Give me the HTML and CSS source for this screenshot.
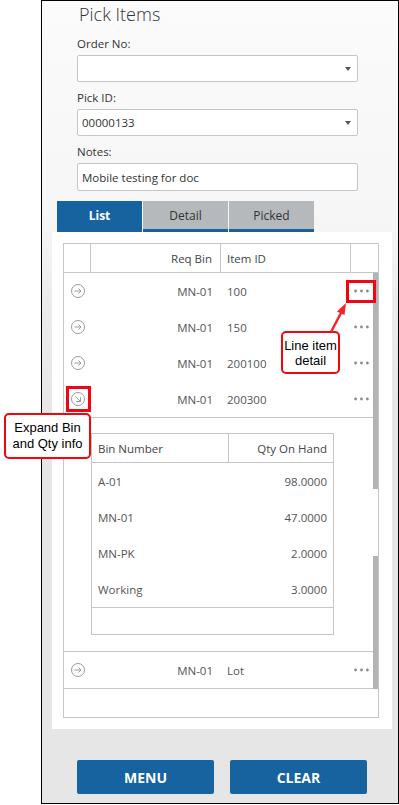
FILE: index.html
```html
<!DOCTYPE html>
<html>
<head>
<meta charset="utf-8">
<link rel="stylesheet" href="styles.css">
</head>
<body>
<div class="frame">
  <div class="title">Pick Items</div>
  <div class="form">
    <div class="label first">Order No:</div>
    <div class="field select"><span class="val"></span><span class="caret"></span></div>
    <div class="label">Pick ID:</div>
    <div class="field select"><span class="val">00000133</span><span class="caret"></span></div>
    <div class="label">Notes:</div>
    <div class="field notes"><span class="val">Mobile testing for doc</span></div>
  </div>
  <div class="tabs">
    <div class="tab active">List</div>
    <div class="tab">Detail</div>
    <div class="tab">Picked</div>
  </div>
  <div class="panel">
    <div class="grid">
      <div class="ghead">
        <div class="hc c1"></div>
        <div class="hc c2">Req Bin</div>
        <div class="hc c3">Item ID</div>
        <div class="hc c4"></div>
      </div>
      <div class="row">
        <div class="c1"><svg class="ic" width="16" height="16" viewBox="0 0 16 16"><circle cx="8" cy="8" r="6.5" fill="none" stroke="#9c9c9c" stroke-width="1"/><path d="M4.5 8H11M8.5 5.5L11 8L8.5 10.5" fill="none" stroke="#9c9c9c" stroke-width="1"/></svg></div>
        <div class="c2">MN-01</div><div class="c3">100</div>
        <div class="c4"><svg width="15" height="4" viewBox="0 0 15 4"><circle cx="1.6" cy="2" r="1.4" fill="#8a8a8a"/><circle cx="7.5" cy="2" r="1.4" fill="#8a8a8a"/><circle cx="13.4" cy="2" r="1.4" fill="#8a8a8a"/></svg></div>
      </div>
      <div class="row">
        <div class="c1"><svg class="ic" width="16" height="16" viewBox="0 0 16 16"><circle cx="8" cy="8" r="6.5" fill="none" stroke="#9c9c9c" stroke-width="1"/><path d="M4.5 8H11M8.5 5.5L11 8L8.5 10.5" fill="none" stroke="#9c9c9c" stroke-width="1"/></svg></div>
        <div class="c2">MN-01</div><div class="c3">150</div>
        <div class="c4"><svg width="15" height="4" viewBox="0 0 15 4"><circle cx="1.6" cy="2" r="1.4" fill="#8a8a8a"/><circle cx="7.5" cy="2" r="1.4" fill="#8a8a8a"/><circle cx="13.4" cy="2" r="1.4" fill="#8a8a8a"/></svg></div>
      </div>
      <div class="row">
        <div class="c1"><svg class="ic" width="16" height="16" viewBox="0 0 16 16"><circle cx="8" cy="8" r="6.5" fill="none" stroke="#9c9c9c" stroke-width="1"/><path d="M4.5 8H11M8.5 5.5L11 8L8.5 10.5" fill="none" stroke="#9c9c9c" stroke-width="1"/></svg></div>
        <div class="c2">MN-01</div><div class="c3">200100</div>
        <div class="c4"><svg width="15" height="4" viewBox="0 0 15 4"><circle cx="1.6" cy="2" r="1.4" fill="#8a8a8a"/><circle cx="7.5" cy="2" r="1.4" fill="#8a8a8a"/><circle cx="13.4" cy="2" r="1.4" fill="#8a8a8a"/></svg></div>
      </div>
      <div class="row last">
        <div class="c1"><svg class="ic" width="16" height="16" viewBox="0 0 16 16"><circle cx="8" cy="8" r="6.5" fill="none" stroke="#9c9c9c" stroke-width="1"/><path d="M5.3 5.3L10.5 10.5M10.5 6.3V10.5H6.3" fill="none" stroke="#9c9c9c" stroke-width="1"/></svg></div>
        <div class="c2">MN-01</div><div class="c3">200300</div>
        <div class="c4"><svg width="15" height="4" viewBox="0 0 15 4"><circle cx="1.6" cy="2" r="1.4" fill="#8a8a8a"/><circle cx="7.5" cy="2" r="1.4" fill="#8a8a8a"/><circle cx="13.4" cy="2" r="1.4" fill="#8a8a8a"/></svg></div>
      </div>
      <div class="expand">
        <div class="sub">
          <div class="shead">
            <div class="sc1">Bin Number</div>
            <div class="sc2">Qty On Hand</div>
          </div>
          <div class="srow"><div class="sc1">A-01</div><div class="sc2">98.0000</div></div>
          <div class="srow"><div class="sc1">MN-01</div><div class="sc2">47.0000</div></div>
          <div class="srow"><div class="sc1">MN-PK</div><div class="sc2">2.0000</div></div>
          <div class="srow"><div class="sc1">Working</div><div class="sc2">3.0000</div></div>
          <div class="sfill"></div>
        </div>
      </div>
      <div class="row last">
        <div class="c1"><svg class="ic" width="16" height="16" viewBox="0 0 16 16"><circle cx="8" cy="8" r="6.5" fill="none" stroke="#9c9c9c" stroke-width="1"/><path d="M4.5 8H11M8.5 5.5L11 8L8.5 10.5" fill="none" stroke="#9c9c9c" stroke-width="1"/></svg></div>
        <div class="c2">MN-01</div><div class="c3">Lot</div>
        <div class="c4"><svg width="15" height="4" viewBox="0 0 15 4"><circle cx="1.6" cy="2" r="1.4" fill="#8a8a8a"/><circle cx="7.5" cy="2" r="1.4" fill="#8a8a8a"/><circle cx="13.4" cy="2" r="1.4" fill="#8a8a8a"/></svg></div>
      </div>
      <div class="gfill"></div>
      <div class="scroll s1"></div>
      <div class="scroll s2"></div>
    </div>
  </div>
  <div class="buttons">
    <div class="btn">MENU</div>
    <div class="btn">CLEAR</div>
  </div>
</div>

<div class="mark m1"></div>
<div class="mark m2"></div>
<div class="callout co1">Line item<br>detail</div>
<div class="callout co2">Expand Bin<br>and Qty info</div>
<svg class="arrow" width="30" height="34" viewBox="0 0 30 34">
  <path d="M9 32L19.5 12" stroke="#f0262a" stroke-width="2.5" fill="none"/>
  <path d="M24 3L15 11.5L22.5 15Z" fill="#f0262a"/>
</svg>
</body>
</html>
```

FILE: styles.css
```css
* { box-sizing: border-box; }
html, body { margin: 0; padding: 0; background: #fff; }
body {
  font-family: "Open Sans", "Noto Sans", sans-serif;
  font-size: 12px;
  color: #333;
  position: relative;
  width: 399px;
  height: 805px;
  overflow: hidden;
}
.frame {
  margin-left: 41px;
  width: 358px;
  height: 804px;
  border: 1px solid #000;
  background: linear-gradient(#fbfbfb 0px, #f6f6f6 220px, #ececec 300px, #e6e6e6 420px, #e6e6e6 100%);
  display: flex;
  flex-direction: column;
}
.title {
  height: 35px;
  padding: 1px 0 0 37px;
  font-size: 18px;
  font-weight: 300;
  line-height: 24px;
  color: #333;
}
.form {
  padding-left: 35px;
  width: 316px;
}
.label {
  height: 16px;
  line-height: 16px;
  margin-top: 8px;
  margin-bottom: 3px;
  font-size: 11.5px;
  color: #333;
}
.label.first { margin-top: 0; }
.field {
  height: 27px;
  background: #fff;
  border: 1px solid #c6c6c6;
  border-radius: 2px;
  display: flex;
  align-items: center;
  justify-content: space-between;
  padding: 0 6px 0 4px;
}
.field.notes { height: 28px; }
.val { font-size: 11.5px; color: #333; }
.caret {
  width: 0; height: 0;
  border-left: 3.5px solid transparent;
  border-right: 3.5px solid transparent;
  border-top: 4px solid #555;
}
.tabs {
  margin-top: 10px;
  padding-left: 15px;
  display: flex;
  gap: 1px;
  height: 31px;
}
.tab {
  width: 85px;
  height: 31px;
  background: #b5b9bc;
  border-bottom: 3px solid #16619e;
  display: flex;
  align-items: center;
  justify-content: center;
  padding-top: 0;
  font-size: 12px;
  color: #333;
}
.tab.active {
  background: #16639f;
  color: #fff;
  font-weight: 700;
  border-bottom-color: #16639f;
}
.panel {
  margin-left: 10px;
  width: 340px;
  background: #fff;
  padding: 11px 13px 11px 11px;
}
.grid {
  position: relative;
  border: 1px solid #c6c6c6;
  height: 475px;
  display: flex;
  flex-direction: column;
}
.ghead {
  display: flex;
  height: 29px;
  border-bottom: 1px solid #c6c6c6;
  flex: none;
}
.hc {
  border-right: 1px solid #c6c6c6;
  display: flex;
  align-items: center;
  font-size: 11.5px;
  color: #444;
}
.hc.c4 { border-right: none; }
.c1 { width: 27px; flex: none; }
.c2 { width: 130px; flex: none; justify-content: flex-end; padding-right: 8px; text-align: right; }
.c3 { width: 130px; flex: none; padding-left: 6px; }
.c4 { flex: 1; }
.row {
  display: flex;
  height: 36px;
  align-items: center;
  flex: none;
  font-size: 11.5px;
  color: #555;
}
.row .c1 { display: flex; justify-content: center; align-items: center; }
.row .c4 { display: flex; align-items: center; padding-left: 3px; }
.row.last { border-bottom: 1px solid #c6c6c6; height: 37px; }
.expand {
  padding: 15px 0 16px 27px;
  border-bottom: 1px solid #c6c6c6;
  flex: none;
}
.sub {
  width: 243px;
  border: 1px solid #c6c6c6;
}
.shead {
  display: flex;
  height: 29px;
  border-bottom: 1px solid #c6c6c6;
  align-items: stretch;
  font-size: 11.5px;
  color: #444;
}
.shead .sc1 { border-right: 1px solid #c6c6c6; }
.sc1 { width: 137px; padding-left: 6px; display: flex; align-items: center; }
.sc2 { flex: 1; padding-right: 6px; display: flex; align-items: center; justify-content: flex-end; }
.srow {
  display: flex;
  height: 36px;
  font-size: 11.5px;
  color: #555;
}
.srow:nth-child(5) { border-bottom: 1px solid #c6c6c6; height: 37px; }
.sfill { height: 26px; }
.gfill { flex: 1; }
.scroll {
  position: absolute;
  right: 0;
  width: 5px;
  background: #b3b3b3;
}
.s1 { top: 29px; height: 216px; }
.s2 { top: 312px; height: 133px; }
.buttons {
  margin-top: 31px;
  padding-left: 35px;
  display: flex;
  gap: 16px;
}
.btn {
  width: 137px;
  height: 34px;
  background: #16639f;
  border-radius: 2px;
  color: #fff;
  font-weight: 700;
  font-size: 14px;
  display: flex;
  align-items: center;
  justify-content: center;
}
.mark {
  position: absolute;
  border: 3px solid #f2060e;
}
.m1 { left: 346px; top: 280px; width: 30px; height: 23px; }
.m2 { left: 66px; top: 386px; width: 25px; height: 26px; }
.callout {
  position: absolute;
  background: #fff;
  border: 2px solid #f2060e;
  border-radius: 5px;
  font-family: "Liberation Sans", Arial, sans-serif;
  font-size: 13px;
  color: #000;
  text-align: center;
  display: flex;
  align-items: center;
  justify-content: center;
}
.co1 { left: 281px; top: 331px; width: 59px; height: 43px; line-height: 15px; }
.co2 { left: 4px; top: 413px; width: 87px; height: 46px; line-height: 16px; }
.arrow { position: absolute; left: 322px; top: 300px; }
```
